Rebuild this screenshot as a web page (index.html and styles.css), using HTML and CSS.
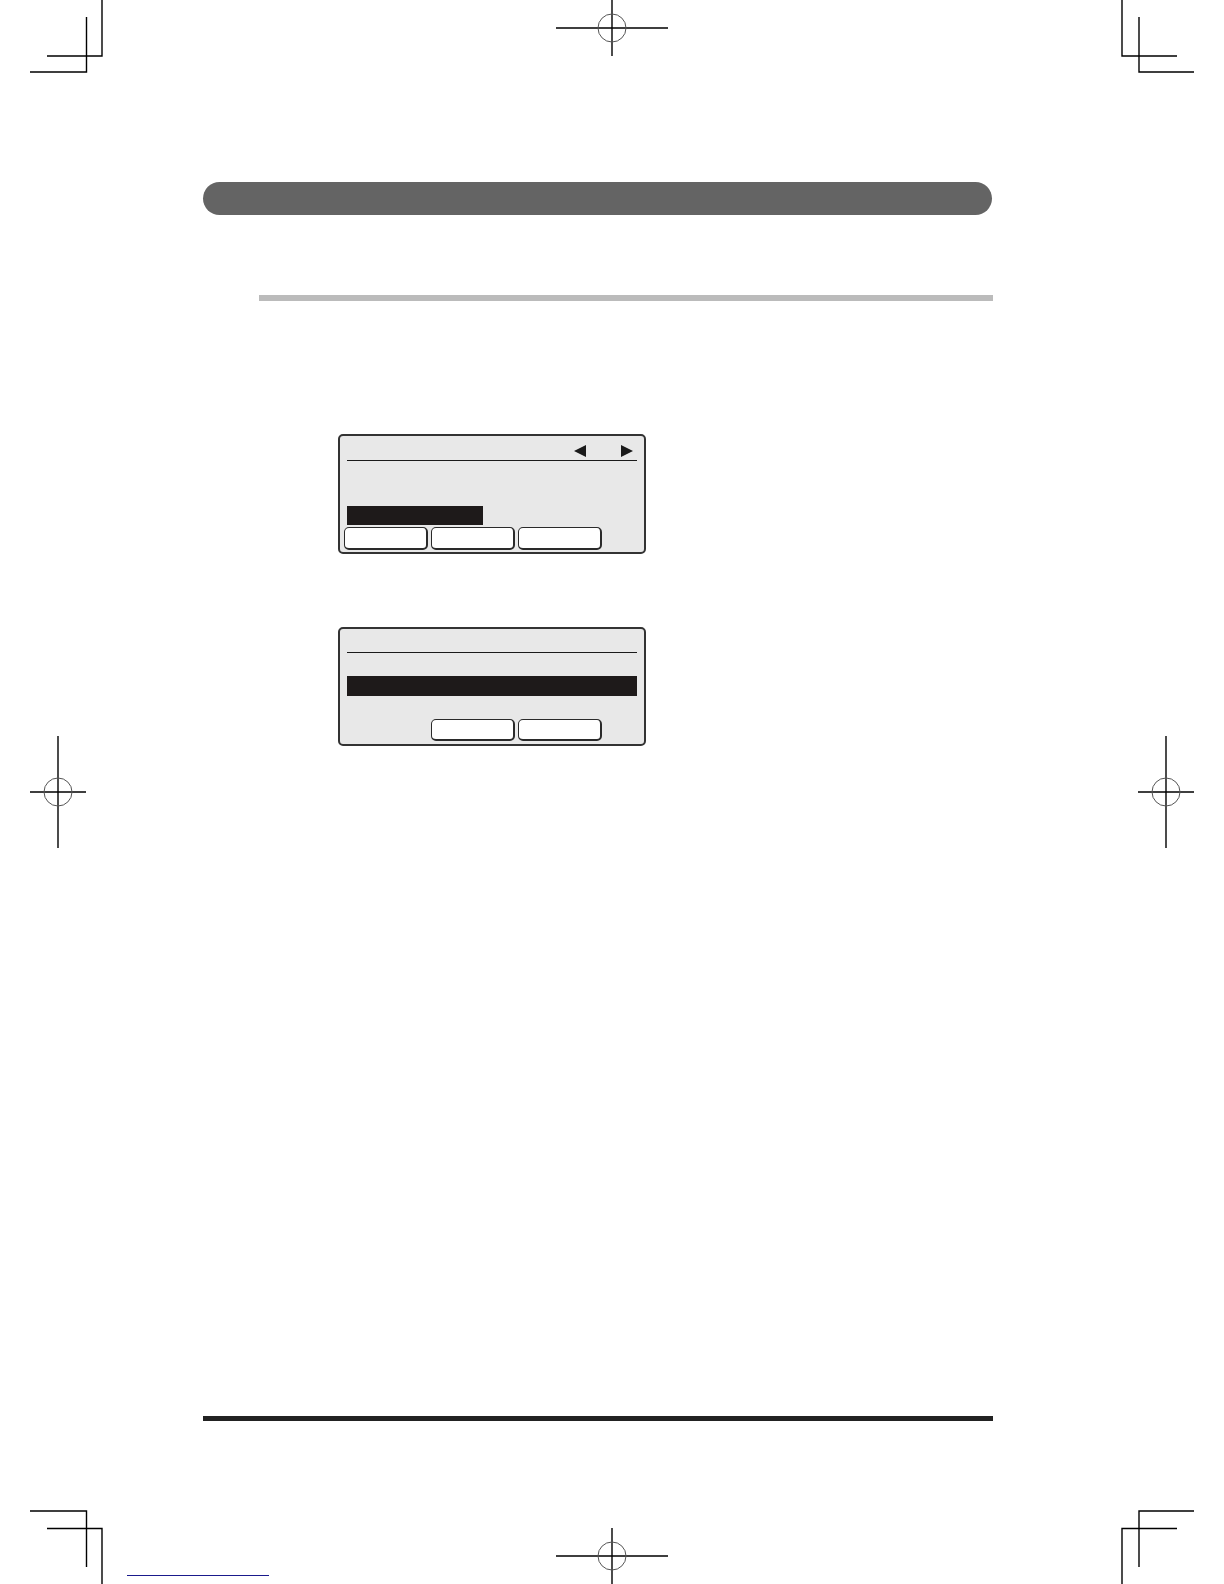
FILE: index.html
```html
<!DOCTYPE html>
<html lang="en">
<head>
<meta charset="utf-8">
<title>Manual page</title>
<link rel="stylesheet" href="styles.css">
</head>
<body>
<div class="page">
  <div class="content">
    <div class="chapter-bar"></div>
    <div class="section-rule"></div>

    <div class="lcd lcd-first">
      <div class="lcd-head">
        <span class="tri tri-left"></span>
        <span class="tri tri-right"></span>
      </div>
      <div class="lcd-rule"></div>
      <div class="lcd-bar lcd-bar-short"></div>
      <div class="lcd-buttons">
        <span class="lcd-btn"></span>
        <span class="lcd-btn"></span>
        <span class="lcd-btn"></span>
      </div>
    </div>

    <div class="lcd lcd-second">
      <div class="lcd-rule"></div>
      <div class="lcd-bar lcd-bar-full"></div>
      <div class="lcd-buttons lcd-buttons-right">
        <span class="lcd-btn"></span>
        <span class="lcd-btn"></span>
      </div>
    </div>

    <div class="footer-rule"></div>
    <div class="footer-link"></div>
  </div>

  <svg class="marks" width="1224" height="1584" viewBox="0 0 1224 1584" aria-hidden="true">
    <g stroke="#000" stroke-width="1.4" fill="none">
      <!-- top left -->
      <path d="M102 0V56H47"/>
      <path d="M86.5 17V72H30"/>
      <!-- top right -->
      <path d="M1122 0V56H1177"/>
      <path d="M1139 17V72H1194"/>
      <!-- bottom left -->
      <path d="M30 1511H86.5V1567"/>
      <path d="M47 1528.5H102V1584"/>
      <!-- bottom right -->
      <path d="M1194 1511H1139V1567"/>
      <path d="M1177 1528.5H1122V1584"/>
      <!-- registration crosses -->
      <path d="M612 0V56M556 28H668"/>
      <path d="M612 1528V1584M556 1556H668"/>
      <path d="M58 736V848M30 792H86"/>
      <path d="M1166 736V848M1138 792H1194"/>
    </g>
    <g stroke="#555" stroke-width="1" fill="none">
      <circle cx="612" cy="28" r="14"/>
      <circle cx="612" cy="1556" r="14"/>
      <circle cx="58" cy="792" r="14"/>
      <circle cx="1166" cy="792" r="14"/>
    </g>
  </svg>
</div>
</body>
</html>
```

FILE: styles.css
```css
html, body {
  margin: 0;
  padding: 0;
  background: #ffffff;
  font-family: "Liberation Sans", Arial, sans-serif;
}

.page {
  position: relative;
  width: 1224px;
  height: 1584px;
  overflow: hidden;
  background: #ffffff;
}

.content {
  display: flex;
  flex-direction: column;
  align-items: flex-start;
  padding-top: 182px;
}

.chapter-bar {
  margin-left: 203px;
  width: 789px;
  height: 33px;
  border-radius: 17px;
  background: #646464;
}

.section-rule {
  margin-top: 80px;
  margin-left: 259px;
  width: 734px;
  height: 6px;
  background: #bbbbbb;
}

.lcd {
  box-sizing: border-box;
  width: 308px;
  margin-left: 338px;
  border: 2px solid #333333;
  border-right-width: 2.5px;
  border-bottom-width: 2.5px;
  border-radius: 5px;
  background: #e8e8e8;
  padding: 0 7px 2px 7px;
  display: flex;
  flex-direction: column;
}

.lcd-first {
  margin-top: 133px;
  height: 120px;
}

.lcd-second {
  margin-top: 73px;
  height: 119px;
  padding-top: 23px;
}

.lcd-head {
  display: flex;
  justify-content: flex-end;
  align-items: center;
  gap: 35px;
  padding-top: 9px;
  padding-right: 4px;
  height: 12px;
  margin-bottom: 3px;
}

.tri {
  display: block;
  width: 0;
  height: 0;
  border-top: 6px solid transparent;
  border-bottom: 6px solid transparent;
}

.tri-left {
  border-right: 12px solid #1a1a1a;
}

.tri-right {
  border-left: 12px solid #1a1a1a;
}

.lcd-rule {
  height: 1px;
  background: #1a1a1a;
}

.lcd-bar {
  background: #1e1a1a;
}

.lcd-bar-short {
  margin-top: 45px;
  width: 136px;
  height: 19px;
}

.lcd-bar-full {
  margin-top: 23px;
  height: 20px;
}

.lcd-buttons {
  display: flex;
  gap: 3px;
  margin-top: 2px;
  margin-left: -3px;
}

.lcd-buttons-right {
  margin-top: 23px;
  margin-left: 84px;
}

.lcd-btn {
  box-sizing: border-box;
  display: block;
  width: 84px;
  height: 23px;
  background: #ffffff;
  border: 1px solid #2a2a2a;
  border-right-width: 2px;
  border-bottom-width: 2px;
  border-radius: 5px;
}

.lcd-buttons-right .lcd-btn {
  height: 22px;
}

.footer-rule {
  margin-top: 670px;
  margin-left: 203px;
  width: 790px;
  height: 5px;
  background: #222222;
}

.footer-link {
  margin-top: 154px;
  margin-left: 127px;
  width: 142px;
  height: 1px;
  background: #1a1a8c;
}

.marks {
  position: absolute;
  left: 0;
  top: 0;
  pointer-events: none;
}
```
